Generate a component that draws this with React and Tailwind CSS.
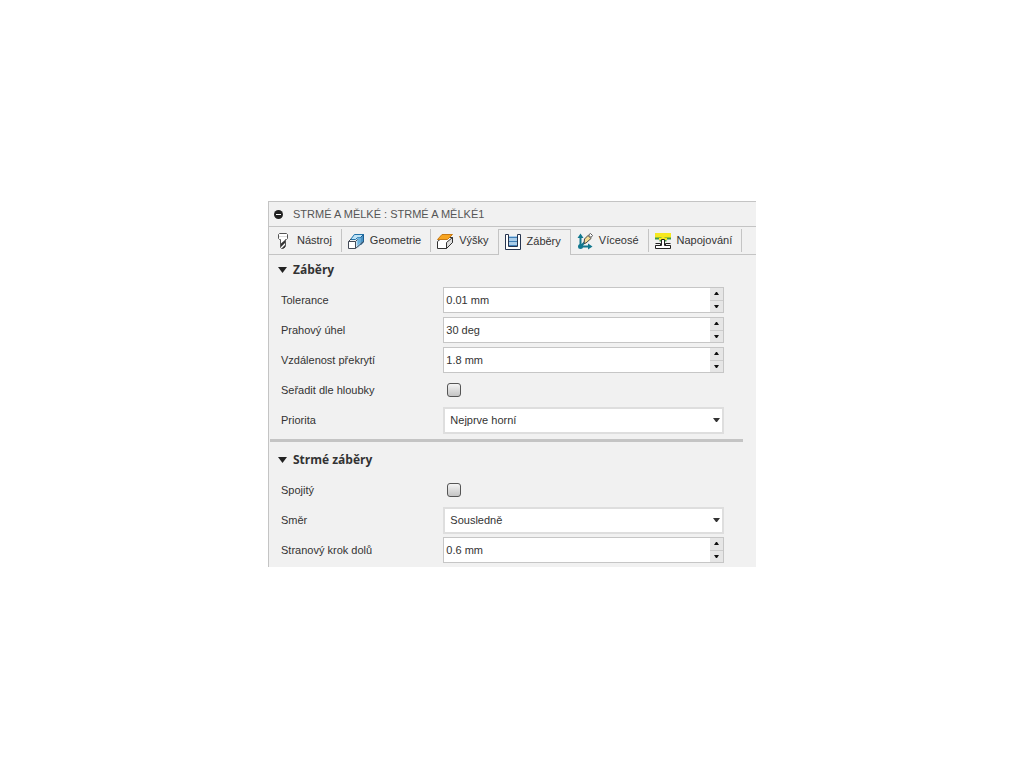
import React, { useState } from 'react';

const ToolIcon = () => (
  <svg width="16" height="18" viewBox="0 0 16 18" fill="none" aria-hidden="true">
    <path d="M3.5 2.5l1-1h7l1 1v4l-1 1h-1v7l-2 2h-2l-1-1v-8h-1l-1-1z" fill="#fff" stroke="#555" />
    <path d="M4 4.5h8" stroke="#ddd" />
    <path d="M6 11.5l4-3.5v3l-4 4z" fill="#333" />
    <path d="M7 16l3-3v2l-1 1z" fill="#333" />
  </svg>
);

const GeometryIcon = () => (
  <svg width="16" height="18" viewBox="0 0 16 18" fill="none" aria-hidden="true">
    <path d="M6 2h9.5v8l-5 5.5h-2V7H3z" fill="#a9d6f2" />
    <path d="M6.500 2.500h9l-3 3h-3l-2 2h-5z" fill="#bfe3f7" stroke="#2272a8" />
    <path d="M9.500 5.500h3v5l-3 3z" fill="#69b0dc" />
    <path d="M12.500 5.500l3-3v7.500l-3 3" fill="#4b93c4" stroke="#1c5f92" />
    <path d="M0.500 9.500h7v7h-7z" fill="#fff" stroke="#444b57" />
    <path d="M0.500 9.500l2.500-2.500M7.500 9.500l2-2M7.500 16.500l8-7" stroke="#444b57" />
  </svg>
);

const HeightsIcon = () => (
  <svg width="16" height="18" viewBox="0 0 16 18" fill="none" aria-hidden="true">
    <path d="M0.500 9.500l5-4h10v5l-6 6h-9z" fill="#fff" stroke="#333" />
    <path d="M9.500 10.500l6-5v5l-6 6z" fill="#ddd" stroke="#333" />
    <path d="M5 2.500h10.500l-5 5H0.500z" fill="#f7a521" stroke="#c87a14" />
  </svg>
);

const PassesIcon = () => (
  <svg width="16" height="18" viewBox="0 0 16 18" fill="none" aria-hidden="true">
    <path d="M3 3h10v10H3z" fill="#a9cdea" />
    <path d="M3 4.500h10M3 8.500h10M3 12.500h10" stroke="#3f7fb8" />
    <path d="M0.500 1.500h3v12h9v-12h3v15h-15z" fill="#fff" stroke="#26344f" />
  </svg>
);

const MultiAxisIcon = () => (
  <svg width="16" height="18" viewBox="0 0 16 18" fill="none" aria-hidden="true">
    <path d="M3.500 14V4M3 14.500h10M4 14l5-5" stroke="#12788f" strokeWidth="2" />
    <path d="M0.500 6l3-4.500 3 4.500zM11 11.500l4.500 3-4.500 3z" fill="#12788f" />
    <circle cx="3.500" cy="14.500" r="2.500" fill="#12788f" />
    <path d="M7.500 7l3.500-3.500 3 3L9 11l-2 .5z" fill="#f3dc93" stroke="#444" />
    <path d="M11.500 3l2-1.500 2 2-1.500 2z" fill="#fff" stroke="#555" />
  </svg>
);

const LinkingIcon = () => (
  <svg width="16" height="18" viewBox="0 0 16 18" fill="none" aria-hidden="true">
    <path d="M0 1h16v5H0z" fill="#f6e820" />
    <path d="M0 6.500h5.500v3M16 6.500h-5.500v3" stroke="#3f9a46" strokeWidth="2" />
    <path d="M4 6h8v2H4z" fill="#f6e820" />
    <path d="M0.500 11.500h5v2h-5M15.500 11.500h-5v2h5" stroke="#222" />
    <path d="M6.500 7.500h3v6h6v3h-15v-3h6z" fill="#fff" stroke="#222" />
  </svg>
);

const tabs = [
  { id: 'tool', label: 'Nástroj', Icon: ToolIcon },
  { id: 'geometry', label: 'Geometrie', Icon: GeometryIcon },
  { id: 'heights', label: 'Výšky', Icon: HeightsIcon },
  { id: 'passes', label: 'Záběry', Icon: PassesIcon },
  { id: 'multiaxis', label: 'Víceosé', Icon: MultiAxisIcon },
  { id: 'linking', label: 'Napojování', Icon: LinkingIcon },
];

const Arrow = ({ up }) => (
  <svg width="5" height="3" viewBox="0 0 5 3" aria-hidden="true">
    <path d={up ? 'M0 3h5L3 0H2z' : 'M0 0h5L3 3H2z'} fill="#111" />
  </svg>
);

const Row = ({ id, label, children }) => (
  <div className="flex h-[30px] items-center">
    <label htmlFor={id} className="w-1/3 shrink-0 pl-3">{label}</label>
    <div className="flex min-w-0 flex-1 items-center pl-3">{children}</div>
  </div>
);

const NumberField = ({ id, label, initial, unit }) => {
  const [value, setValue] = useState(`${initial} ${unit}`);

  const step = (dir) => {
    const next = (parseFloat(value) || 0) + dir * 0.1;
    setValue(`${Number(next.toFixed(3))} ${unit}`);
  };

  return (
    <Row id={id} label={label}>
      <div className="mr-8 flex h-[26px] flex-1 border border-[#c6c6c6] bg-white">
        <input
          id={id}
          type="text"
          value={value}
          onChange={(e) => setValue(e.target.value)}
          className="min-w-0 flex-1 px-0.5 outline-none"
        />
        <div className="flex w-[13px] flex-col divide-y divide-[#cccccc] bg-[#e6e6e6]">
          <button type="button" aria-label="+" onClick={() => step(1)} className="flex flex-1 items-center justify-center">
            <Arrow up />
          </button>
          <button type="button" aria-label="-" onClick={() => step(-1)} className="flex flex-1 items-center justify-center">
            <Arrow />
          </button>
        </div>
      </div>
    </Row>
  );
};

const CheckField = ({ id, label }) => (
  <Row id={id} label={label}>
    <input
      id={id}
      type="checkbox"
      className="ml-1 size-[14px] appearance-none rounded-[3px] border border-[#555555] bg-linear-to-b from-[#f4f4f4] to-[#c4c4c4] checked:to-[#666666]"
    />
  </Row>
);

const SelectField = ({ id, label, options }) => (
  <Row id={id} label={label}>
    <div className="mr-8 grid flex-1 items-center">
      <select
        id={id}
        className="col-start-1 row-start-1 h-[27px] appearance-none border-2 border-[#dedede] bg-white px-[5px] outline-none"
      >
        {options.map((o) => (
          <option key={o}>{o}</option>
        ))}
      </select>
      <svg width="7" height="4" viewBox="0 0 7 4" className="pointer-events-none col-start-1 row-start-1 mr-1 justify-self-end" aria-hidden="true">
        <path d="M0 0h7L4 4H3z" fill="#333" />
      </svg>
    </div>
  </Row>
);

const Section = ({ title, children }) => {
  const [open, setOpen] = useState(true);

  return (
    <section>
      <h2>
        <button
          type="button"
          aria-expanded={open}
          onClick={() => setOpen(!open)}
          className="flex h-[30px] items-center gap-1.5 pl-[9px] font-['Open_Sans',sans-serif] text-[12px] font-bold text-[#333333]"
        >
          <svg width="9" height="6" viewBox="0 0 9 6" aria-hidden="true">
            <path d="M0 0h9L4.500 6z" fill="#222" />
          </svg>
          {title}
        </button>
      </h2>
      {open && children}
    </section>
  );
};

const App = () => {
  const [active, setActive] = useState('passes');

  return (
    <main className="flex min-h-screen items-center justify-center bg-white font-['Liberation_Sans',Arial,sans-serif] text-[11px] text-[#333333]">
      <div className="w-full max-w-[488px] border-t border-l border-[#c4c4c4] bg-[#f1f1f1] pb-0.5">
        <header className="flex h-6 items-center gap-2.5 pl-[5px] text-[#555555]">
          <button type="button" aria-label="−" className="flex size-[9px] items-center justify-center rounded-full bg-[#222222]">
            <span className="h-px w-[5px] bg-white" />
          </button>
          <h1>STRMÉ A MĚLKÉ : STRMÉ A MĚLKÉ1</h1>
        </header>

        <nav role="tablist" className="flex h-[29px] border-y border-[#c4c4c4]">
          {tabs.map(({ id, label, Icon }) => (
            <button
              key={id}
              type="button"
              role="tab"
              aria-selected={active === id}
              onClick={() => setActive(id)}
              className={
                active === id
                  ? '-mb-px -ml-px mt-0.5 flex items-center gap-1.5 border-x border-t border-[#c4c4c4] bg-[#f1f1f1] pr-[9px] pb-0.5 pl-1.5'
                  : 'my-0.5 flex items-center gap-1.5 border-r border-[#c4c4c4] pr-[9px] pl-1.5'
              }
            >
              <Icon />
              {label}
            </button>
          ))}
        </nav>

        <Section title="Záběry">
          <NumberField id="tolerance" label="Tolerance" initial="0.01" unit="mm" />
          <NumberField id="threshold" label="Prahový úhel" initial="30" unit="deg" />
          <NumberField id="overlap" label="Vzdálenost překrytí" initial="1.8" unit="mm" />
          <CheckField id="by-depth" label="Seřadit dle hloubky" />
          <SelectField id="priority" label="Priorita" options={['Nejprve horní', 'Nejprve strmé', 'Nejprve mělké']} />
        </Section>

        <hr className="mt-1 mr-[13px] mb-[3px] ml-px border-t-3 border-[#c4c4c4]" />

        <Section title="Strmé záběry">
          <CheckField id="continuous" label="Spojitý" />
          <SelectField id="direction" label="Směr" options={['Sousledně', 'Nesousledně', 'Obojí']} />
          <NumberField id="stepdown" label="Stranový krok dolů" initial="0.6" unit="mm" />
        </Section>
      </div>
    </main>
  );
};

export default App;
